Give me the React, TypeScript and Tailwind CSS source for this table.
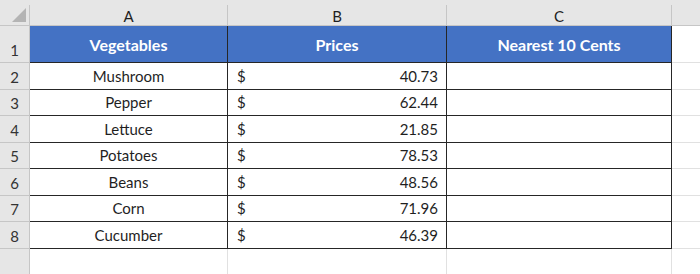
import React from "react";

const rows: [string, string][] = [
  ["Mushroom", "40.73"],
  ["Pepper", "62.44"],
  ["Lettuce", "21.85"],
  ["Potatoes", "78.53"],
  ["Beans", "48.56"],
  ["Corn", "71.96"],
  ["Cucumber", "46.39"],
];

const rowHeights = ["h-[27px]", "h-[26px]", "h-[27px]", "h-[26px]", "h-[27px]", "h-[26px]", "h-[27px]"];

const font = { fontFamily: "Lato, 'Liberation Sans', sans-serif" };

export default function App() {
  return (
    <div className="w-[700px] h-[274px] overflow-hidden bg-white text-[#1f1f1f]" style={font}>
      {/* column letters */}
      <div className="flex h-[26px] bg-[#e6e6e6] border-b border-[#c6c6c6]">
        <div className="w-[30px] shrink-0 flex items-end justify-end pr-[3px] pb-[3px] border-r border-[#c6c6c6] mt-[5px]">
          <svg width="14" height="14" viewBox="0 0 14 14">
            <polygon points="14,0 14,14 0,14" fill="#b4b4b4" />
          </svg>
        </div>
        {[
          ["A", "w-[198px]"],
          ["B", "w-[219px]"],
          ["C", "w-[225px]"],
        ].map(([l, w]) => (
          <div key={l} className={`${w} shrink-0 flex items-center justify-center text-[15px] pt-[3px] border-r border-[#c6c6c6] mt-[5px]`}>
            {l}
          </div>
        ))}
        <div className="flex-1" />
      </div>

      {/* row 1: headers */}
      <div className="flex h-[37px]">
        <div className="w-[30px] shrink-0 bg-[#e6e6e6] border-r border-b border-[#c6c6c6] flex items-end justify-center pb-[1px] text-[15px] text-[#333]">
          1
        </div>
        <div className="w-[198px] shrink-0 bg-[#4472c4] border-r border-b border-[#262626] flex items-center justify-center pt-[1px] text-white font-bold text-[16px]">
          Vegetables
        </div>
        <div className="w-[219px] shrink-0 bg-[#4472c4] border-r border-b border-[#262626] flex items-center justify-center pt-[1px] text-white font-bold text-[16px]">
          Prices
        </div>
        <div className="w-[225px] shrink-0 bg-[#4472c4] border-r border-b border-[#262626] flex items-center justify-center pt-[1px] text-white font-bold text-[16px]">
          Nearest 10 Cents
        </div>
        <div className="flex-1 border-b border-[#e1e1e1]" />
      </div>

      {rows.map(([veg, price], i) => (
        <div key={veg} className={`flex ${rowHeights[i]}`}>
          <div className="w-[30px] shrink-0 bg-[#e6e6e6] border-r border-b border-[#c6c6c6] flex items-end justify-center pb-[1px] text-[15px] text-[#333]">
            {i + 2}
          </div>
          <div className="w-[198px] shrink-0 border-r border-b border-[#262626] flex items-end justify-center pb-[2px] text-[15px]">
            {veg}
          </div>
          <div className="w-[219px] shrink-0 border-r border-b border-[#262626] flex items-end justify-between pl-[9px] pr-[8px] pb-[2px] text-[15px]">
            <span>$</span>
            <span>{price}</span>
          </div>
          <div className="w-[225px] shrink-0 border-r border-b border-[#262626]" />
          <div className="flex-1 border-b border-[#e1e1e1]" />
        </div>
      ))}

      {/* empty row below */}
      <div className="flex h-[25px]">
        <div className="w-[30px] shrink-0 bg-[#e6e6e6] border-r border-[#c6c6c6]" />
        <div className="w-[198px] shrink-0 border-r border-[#e1e1e1]" />
        <div className="w-[219px] shrink-0 border-r border-[#e1e1e1]" />
        <div className="w-[225px] shrink-0 border-r border-[#e1e1e1]" />
        <div className="flex-1" />
      </div>
    </div>
  );
}
